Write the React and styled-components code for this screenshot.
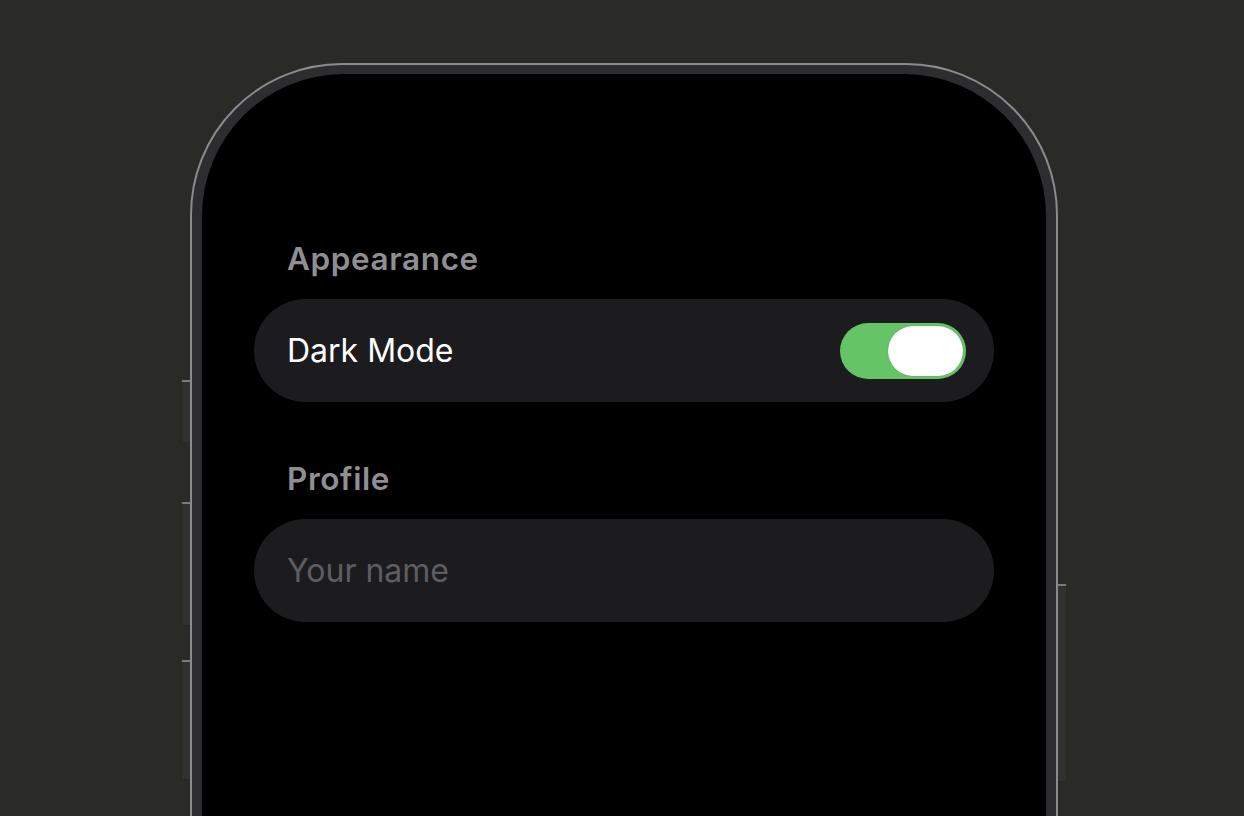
import React, { useState } from "react";
import styled, { createGlobalStyle } from "styled-components";

const Global = createGlobalStyle`
  html, body { margin: 0; padding: 0; background: #2a2a26; }
  body { font-family: Inter, "Noto Sans", sans-serif; overflow: hidden; }
  #root { height: 816px; }
`;

const Page = styled.div`
  height: 816px;
  background: #2a2a26;
  display: flex;
  justify-content: center;
  padding: 63px 0 0 4px;
  box-sizing: border-box;
  overflow: hidden;
`;

const Phone = styled.div`
  position: relative;
  width: 868px;
  height: 980px;
  flex: none;
  box-sizing: border-box;
  border: 2px solid #8b8b8d;
  border-radius: 152px;
  background: #2d2d2f;
  padding: 9px 10px;
`;

const SideButton = styled.div`
  position: absolute;
  top: ${(p) => p.$top}px;
  height: ${(p) => p.$h}px;
  width: 9px;
  background: #303031;
  border: 1px solid #262627;
  border-top: 2px solid #7a7a7a;
  box-sizing: border-box;
  ${(p) =>
    p.$right
      ? "right: -11px; border-left: none; border-radius: 0 2px 2px 0;"
      : "left: -11px; border-right: none; border-radius: 2px 0 0 2px;"}
`;

const Screen = styled.div`
  height: 100%;
  background: #000;
  border-radius: 142px;
  padding: 167px 52px 0 52px;
  box-sizing: border-box;
  display: flex;
  flex-direction: column;
`;

const Section = styled.section`
  display: flex;
  flex-direction: column;
  gap: 22px;
  & + & {
    margin-top: 59px;
  }
`;

const Header = styled.h2`
  margin: 0;
  padding-left: 33px;
  font-size: 31.5px;
  line-height: 36px;
  font-weight: 600;
  color: #8e8e93;
  letter-spacing: 0.6px;
`;

const Card = styled.div`
  height: 103px;
  border-radius: 52px;
  background: #1c1c1e;
  display: flex;
  align-items: center;
  justify-content: space-between;
  padding: 0 28px 0 33px;
  box-sizing: border-box;
`;

const Label = styled.span`
  font-size: 32px;
  line-height: 41px;
  color: #ffffff;
  font-weight: 400;
`;

const NameInput = styled.input`
  flex: 1;
  background: transparent;
  border: none;
  outline: none;
  padding: 0;
  font-family: Inter, "Noto Sans", sans-serif;
  font-size: 32px;
  line-height: 41px;
  color: #ffffff;
  &::placeholder {
    color: #5d5d62;
  }
`;

const Toggle = styled.button`
  width: 126px;
  height: 56px;
  border-radius: 28px;
  border: none;
  padding: 3px;
  box-sizing: border-box;
  background: ${(p) => (p.$on ? "#65c466" : "#39393d")};
  display: flex;
  justify-content: ${(p) => (p.$on ? "flex-end" : "flex-start")};
  align-items: center;
  cursor: pointer;
`;

const Knob = styled.span`
  width: 75px;
  height: 50px;
  border-radius: 25px;
  background: #ffffff;
  box-shadow: 0 0 1px rgba(0, 0, 0, 0.35);
`;

export default function App() {
  const [dark, setDark] = useState(true);
  const [name, setName] = useState("");
  return (
    <>
      <Global />
      <Page>
        <Phone>
          <SideButton $top={315} $h={63} />
          <SideButton $top={437} $h={124} />
          <SideButton $top={595} $h={120} />
          <SideButton $right $top={519} $h={198} />
          <Screen>
            <Section>
              <Header>Appearance</Header>
              <Card>
                <Label>Dark Mode</Label>
                <Toggle $on={dark} onClick={() => setDark(!dark)} aria-label="Dark Mode">
                  <Knob />
                </Toggle>
              </Card>
            </Section>
            <Section>
              <Header>Profile</Header>
              <Card>
                <NameInput
                  placeholder="Your name"
                  value={name}
                  onChange={(e) => setName(e.target.value)}
                />
              </Card>
            </Section>
          </Screen>
        </Phone>
      </Page>
    </>
  );
}
